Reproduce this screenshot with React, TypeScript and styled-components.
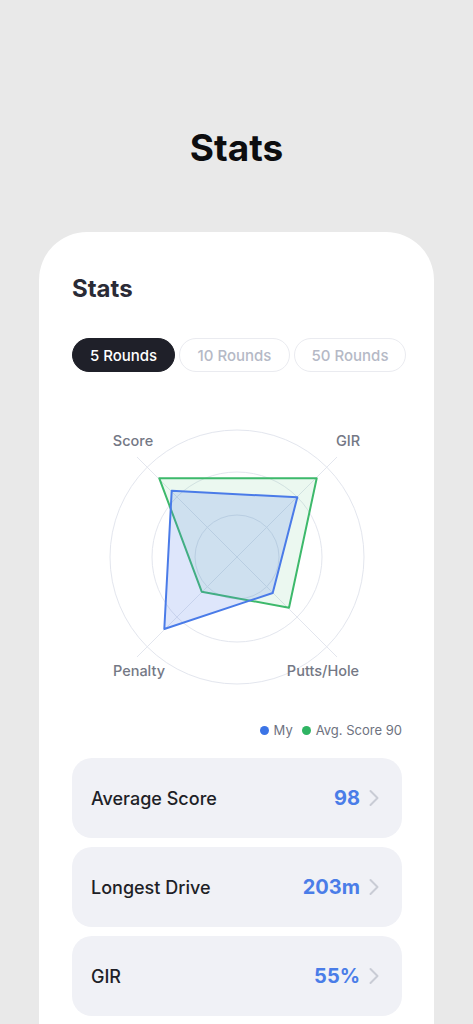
import React, { useState } from 'react';
import styled, { createGlobalStyle } from 'styled-components';

const GlobalStyle = createGlobalStyle`
  html, body {
    margin: 0;
    padding: 0;
    background: #e9e9e9;
  }
  body {
    font-family: Inter, 'Noto Sans', sans-serif;
    -webkit-font-smoothing: antialiased;
  }
`;

const Page = styled.div`
  height: 1024px;
  overflow: hidden;
  padding-top: 125px;
  box-sizing: border-box;
`;

const PageTitle = styled.h1`
  margin: 0;
  text-align: center;
  font-size: 37px;
  line-height: 46px;
  font-weight: 700;
  color: #0d0d0f;
`;

const Card = styled.section`
  margin: 61px 39px 0;
  background: #ffffff;
  border-radius: 48px 48px 0 0;
  padding: 43px 32px 40px 33px;
  min-height: 900px;
  box-sizing: border-box;
`;

const CardTitle = styled.h2`
  margin: 0;
  font-size: 24px;
  line-height: 28px;
  font-weight: 700;
  color: #2a2b36;
`;

const Tabs = styled.div`
  display: flex;
  gap: 4px;
  margin-top: 35px;
`;

const Tab = styled.button<{ $active?: boolean; $w: number }>`
  flex: 0 0 ${(p) => p.$w}px;
  height: 34px;
  border-radius: 17px;
  border: 1px solid ${(p) => (p.$active ? '#1f2029' : '#eaebf0')};
  background: ${(p) => (p.$active ? '#1f2029' : '#ffffff')};
  color: ${(p) => (p.$active ? '#ffffff' : '#b5b9c6')};
  font-family: inherit;
  font-size: 15px;
  font-weight: 500;
  padding: 0;
  cursor: pointer;
`;

const ChartWrap = styled.div`
  display: flex;
  justify-content: center;
  margin-top: 35px;
`;

const Legend = styled.div`
  display: flex;
  justify-content: flex-end;
  align-items: center;
  gap: 9px;
  margin-top: 14px;
  font-size: 13px;
  line-height: 18px;
  color: #6e7280;
`;

const LegendItem = styled.span`
  display: flex;
  align-items: center;
  gap: 5px;
`;

const Dot = styled.i<{ $color: string }>`
  width: 9px;
  height: 9px;
  border-radius: 50%;
  background: ${(p) => p.$color};
`;

const Rows = styled.div`
  display: flex;
  flex-direction: column;
  gap: 9px;
  margin-top: 19px;
`;

const Row = styled.div`
  height: 80px;
  border-radius: 20px;
  background: #f0f1f6;
  display: flex;
  align-items: center;
  padding: 0 22px 0 19px;
  box-sizing: border-box;
`;

const RowLabel = styled.span`
  flex: 1;
  font-size: 18px;
  font-weight: 500;
  color: #1e1f27;
`;

const RowValue = styled.span`
  font-size: 20px;
  font-weight: 700;
  color: #4a7de8;
  margin-right: 8px;
`;

const Chevron = () => (
  <svg width="12" height="18" viewBox="0 0 12 18" fill="none">
    <path d="M2.5 2l7 7-7 7" stroke="#c9ccd5" strokeWidth="2" strokeLinecap="round" strokeLinejoin="round" />
  </svg>
);

const labelStyle = { fontSize: 14.5, fontWeight: 500, fill: '#747885', fontFamily: 'Inter, sans-serif' };

const Radar = () => (
  <svg width="300" height="300" viewBox="0 0 300 300">
    <g stroke="#e3e6ee" strokeWidth="1" fill="none">
      <circle cx="150" cy="150" r="127" />
      <circle cx="150" cy="150" r="85" />
      <circle cx="150" cy="150" r="42" />
      <line x1="50" y1="50" x2="250" y2="250" />
      <line x1="250" y1="50" x2="50" y2="250" />
    </g>
    <polygon
      points="72.3,71.3 229.7,71.3 202,200.7 114.7,184.7"
      fill="rgba(60,185,106,0.1)"
      stroke="#3db96b"
      strokeWidth="2"
      strokeLinejoin="round"
    />
    <polygon
      points="84.7,83.7 210.3,90.3 185.7,186 77.3,222"
      fill="rgba(90,130,235,0.2)"
      stroke="#4a7be8"
      strokeWidth="2"
      strokeLinejoin="round"
    />
    <text x="46" y="39" textAnchor="middle" style={labelStyle}>Score</text>
    <text x="261" y="39" textAnchor="middle" style={labelStyle}>GIR</text>
    <text x="52" y="269" textAnchor="middle" style={labelStyle}>Penalty</text>
    <text x="236" y="269" textAnchor="middle" style={labelStyle}>Putts/Hole</text>
  </svg>
);

const tabs = [
  { label: '5 Rounds', w: 103 },
  { label: '10 Rounds', w: 111 },
  { label: '50 Rounds', w: 112 },
];

const stats = [
  { label: 'Average Score', value: '98' },
  { label: 'Longest Drive', value: '203m' },
  { label: 'GIR', value: '55%' },
];

export default function App() {
  const [active, setActive] = useState(0);
  return (
    <>
      <GlobalStyle />
      <Page>
        <PageTitle>Stats</PageTitle>
        <Card>
          <CardTitle>Stats</CardTitle>
          <Tabs>
            {tabs.map((t, i) => (
              <Tab key={t.label} $w={t.w} $active={i === active} onClick={() => setActive(i)}>
                {t.label}
              </Tab>
            ))}
          </Tabs>
          <ChartWrap>
            <Radar />
          </ChartWrap>
          <Legend>
            <LegendItem>
              <Dot $color="#3b74e6" />
              My
            </LegendItem>
            <LegendItem>
              <Dot $color="#2fb463" />
              Avg. Score 90
            </LegendItem>
          </Legend>
          <Rows>
            {stats.map((s) => (
              <Row key={s.label}>
                <RowLabel>{s.label}</RowLabel>
                <RowValue>{s.value}</RowValue>
                <Chevron />
              </Row>
            ))}
          </Rows>
        </Card>
      </Page>
    </>
  );
}
